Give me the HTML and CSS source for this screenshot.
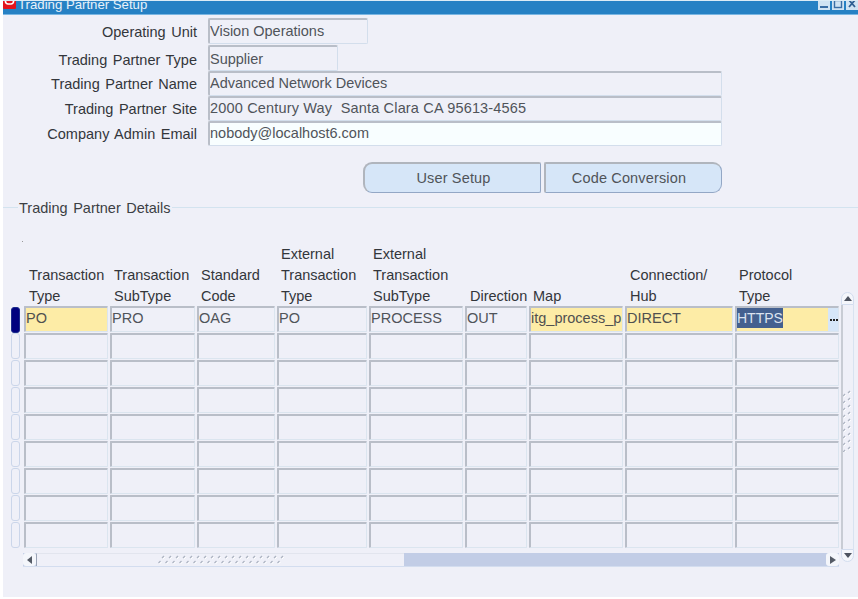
FILE: index.html
```
<!DOCTYPE html>
<html lang="en">
<head>
<meta charset="utf-8">
<title>Trading Partner Setup</title>
<link rel="stylesheet" href="styles.css">
</head>
<body>
<div class="window">
  <header class="titlebar">
    <svg class="app-icon" width="13" height="10" viewBox="0 0 13 10"><rect width="13" height="10" rx="1" fill="#e3141c"/><path d="M2.5 0v2.5a2.5 2.5 0 0 0 2.5 2.5h3a2.5 2.5 0 0 0 2.5-2.5V0" fill="none" stroke="#fff" stroke-width="1.7"/></svg>
    <span class="title-text">Trading Partner Setup</span>
    <div class="win-controls">
      <span class="win-btn"><svg width="12" height="10" viewBox="0 0 12 10"><rect x="2" y="6" width="8" height="2" fill="#3a6ea5"/></svg></span>
      <span class="win-btn"><svg width="12" height="10" viewBox="0 0 12 10"><rect x="2.5" y="0.5" width="7" height="7" fill="none" stroke="#3a6ea5" stroke-width="1.4"/></svg></span>
      <span class="win-btn"><svg width="12" height="10" viewBox="0 0 12 10"><path d="M3 0l6 7M9 0L3 7" stroke="#2f5f92" stroke-width="1.8"/></svg></span>
    </div>
  </header>

  <section class="form">
    <div class="form-row r26 row-first"><label class="form-label">Operating Unit</label><div class="field w-unit">Vision Operations</div></div>
    <div class="form-row r26 row-second"><label class="form-label">Trading Partner Type</label><div class="field w-type">Supplier</div></div>
    <div class="form-row r25"><label class="form-label">Trading Partner Name</label><div class="field w-full">Advanced Network Devices</div></div>
    <div class="form-row r25"><label class="form-label">Trading Partner Site</label><div class="field w-full field-wide">2000 Century Way&nbsp; Santa Clara CA 95613-4565</div></div>
    <div class="form-row r25"><label class="form-label">Company Admin Email</label><div class="field w-full field-input">nobody@localhost6.com</div></div>
  </section>

  <div class="actions">
    <button class="btn btn-left">User Setup</button>
    <button class="btn btn-right">Code Conversion</button>
  </div>

  <div class="section-head">
    <span class="section-rule short"></span>
    <span class="section-title">Trading Partner Details</span>
    <span class="section-rule"></span>
  </div>

  <i class="speck"></i>

  <section class="details">
    <div class="table-col">
      <div class="grid head">
        <span></span>
        <div class="th th-5">Transaction Type</div>
        <div class="th">Transaction SubType</div>
        <div class="th">Standard Code</div>
        <div class="th">External Transaction Type</div>
        <div class="th">External Transaction SubType</div>
        <div class="th th-5 nowrap">Direction</div>
        <div class="th">Map</div>
        <div class="th th-5">Connection/ Hub</div>
        <div class="th">Protocol<br>Type</div>
      </div>
      <div class="grid rows">
        <span class="ind ind-on"></span>
        <div class="cell req">PO</div><div class="cell">PRO</div><div class="cell">OAG</div><div class="cell">PO</div><div class="cell">PROCESS</div><div class="cell">OUT</div><div class="cell req">itg_process_p</div><div class="cell req">DIRECT</div>
        <div class="cell req cell-last"><span class="sel">HTTPS</span><span class="lov"><svg width="9" height="3" viewBox="0 0 9 3"><path d="M1 0h2v2H1zM4 0h2v2H4zM7 0h2v2H7z" fill="#222"/></svg></span></div>

        <span class="ind"></span><div class="cell"></div><div class="cell"></div><div class="cell"></div><div class="cell"></div><div class="cell"></div><div class="cell"></div><div class="cell"></div><div class="cell"></div><div class="cell"></div>
        <span class="ind"></span><div class="cell"></div><div class="cell"></div><div class="cell"></div><div class="cell"></div><div class="cell"></div><div class="cell"></div><div class="cell"></div><div class="cell"></div><div class="cell"></div>
        <span class="ind"></span><div class="cell"></div><div class="cell"></div><div class="cell"></div><div class="cell"></div><div class="cell"></div><div class="cell"></div><div class="cell"></div><div class="cell"></div><div class="cell"></div>
        <span class="ind"></span><div class="cell"></div><div class="cell"></div><div class="cell"></div><div class="cell"></div><div class="cell"></div><div class="cell"></div><div class="cell"></div><div class="cell"></div><div class="cell"></div>
        <span class="ind"></span><div class="cell"></div><div class="cell"></div><div class="cell"></div><div class="cell"></div><div class="cell"></div><div class="cell"></div><div class="cell"></div><div class="cell"></div><div class="cell"></div>
        <span class="ind"></span><div class="cell"></div><div class="cell"></div><div class="cell"></div><div class="cell"></div><div class="cell"></div><div class="cell"></div><div class="cell"></div><div class="cell"></div><div class="cell"></div>
        <span class="ind"></span><div class="cell"></div><div class="cell"></div><div class="cell"></div><div class="cell"></div><div class="cell"></div><div class="cell"></div><div class="cell"></div><div class="cell"></div><div class="cell"></div>
        <span class="ind"></span><div class="cell"></div><div class="cell"></div><div class="cell"></div><div class="cell"></div><div class="cell"></div><div class="cell"></div><div class="cell"></div><div class="cell"></div><div class="cell"></div>
      </div>
      <div class="hscroll">
        <span class="arrow-btn arrow-l"><svg width="6" height="8" viewBox="0 0 6 8"><path d="M5 0v8L0 4z" fill="#555b66"/></svg></span>
        <span class="hthumb">
          <svg class="grip" width="126" height="10" viewBox="0 0 126 10">
            <defs><pattern id="gh" width="7" height="10" patternUnits="userSpaceOnUse"><path d="M4 3l2-2" stroke="#adb4c2" stroke-width="1.2"/><path d="M5 4l2-2" stroke="#fff" stroke-width="1"/><path d="M.5 8l2-2" stroke="#adb4c2" stroke-width="1.2"/><path d="M1.5 9l2-2" stroke="#fff" stroke-width="1"/></pattern></defs>
            <rect width="126" height="10" fill="url(#gh)"/>
          </svg>
        </span>
        <span class="htrack"></span>
        <span class="arrow-btn arrow-r"><svg width="6" height="8" viewBox="0 0 6 8"><path d="M0 0v8l6-4z" fill="#555b66"/></svg></span>
      </div>
    </div>
    <div class="vscroll">
      <span class="v-arrow v-up"><svg width="8" height="5" viewBox="0 0 8 5"><path d="M0 5h8L4 0z" fill="#4d5360"/></svg></span>
      <span class="vthumb">
        <svg class="grip" width="10" height="62" viewBox="0 0 10 62">
          <defs><pattern id="gv" width="10" height="7" patternUnits="userSpaceOnUse"><path d="M0 6l2-2" stroke="#adb4c2" stroke-width="1.2"/><path d="M1 7l2-2" stroke="#fff" stroke-width="1"/><path d="M5 3l2-2" stroke="#adb4c2" stroke-width="1.2"/><path d="M6 4l2-2" stroke="#fff" stroke-width="1"/></pattern></defs>
          <rect width="10" height="62" fill="url(#gv)"/>
        </svg>
      </span>
      <span class="v-arrow v-down"><svg width="8" height="5" viewBox="0 0 8 5"><path d="M0 0h8L4 5z" fill="#4d5360"/></svg></span>
    </div>
  </section>
</div>
</body>
</html>
```
FILE: styles.css
```
* { box-sizing: border-box; }
html, body { margin: 0; padding: 0; background: #fff; }
body { width: 858px; height: 599px; overflow: hidden; font-family: "Liberation Sans", Arial, sans-serif; font-size: 14.5px; color: #3a3d42; }

.window { width: 855px; height: 597px; margin-left: 3px; background: #eff0f8; display: flex; flex-direction: column; overflow: hidden; }

.titlebar { height: 15px; flex: none; background: #2681c4; border-bottom: 1px solid #7ab6e2; border-top: 1px solid #dcecf6; display: flex; align-items: flex-start; overflow: hidden; }
.app-icon { flex: none; margin-top: -2px; }
.title-text { color: #e8f2fa; font-size: 13.2px; margin-left: 2px; line-height: 14px; margin-top: -3px; white-space: nowrap; }
.win-controls { margin-left: auto; display: flex; gap: 1px; margin-top: -1px; }
.win-btn { width: 12px; height: 10px; background: #cfe3f3; display: block; margin-left: 1px; }
.win-btn svg { display: block; }

.form { display: flex; flex-direction: column; margin-top: 3px; flex: none; }
.form-row { display: flex; align-items: stretch; }
.r26 { height: 26px; }
.row-first { margin-bottom: 1px; }
.r25 { height: 25px; }
.form-label { width: 194px; text-align: right; line-height: 27px; color: #33363b; flex: none; word-spacing: 1.5px; white-space: nowrap; }
.row-first .form-label { line-height: 28px; }
.row-second .form-label { line-height: 30px; }
.field { margin-left: 11px; padding-left: 0; line-height: 21px; color: #50545a; background: #eff0f8; border: 1px solid #d3deec; border-top: 2px solid #b9bec8; border-left: 2px solid #b9bec8; border-radius: 2px; white-space: nowrap; overflow: hidden; }
.row-first .field { line-height: 22px; }
.row-second .field { line-height: 24px; }
.field-wide { letter-spacing: .17px; }
.w-unit { width: 160px; }
.w-type { width: 130px; }
.w-full { width: 514px; }
.field-input { background: #f8feff; }

.actions { display: flex; gap: 3px; margin: 16px 0 0 360px; flex: none; }
.btn { height: 31px; width: 178px; background: #d6e6f8; border: 1px solid #93a7c5; border-top: 2px solid #b0b5bd; border-left: 2px solid #b0b5bd; color: #505459; font: inherit; letter-spacing: .15px; padding: 0; }
.btn-left { border-radius: 9px 2px 2px 9px; padding-left: 2px; }
.btn-right { border-radius: 2px 9px 9px 2px; padding-right: 9px; }

.section-head { display: flex; align-items: center; margin-top: 7px; height: 16px; flex: none; }
.section-rule { flex: 1; height: 1px; background: #d3e3ef; margin-bottom: 2px; }
.section-rule.short { flex: none; width: 15px; }
.section-title { padding: 0 1px; color: #3c3f44; word-spacing: 1.5px; }

.speck { display: block; width: 1px; height: 1px; background: #999; margin: 25px 0 0 19px; flex: none; }

.details { display: flex; margin-left: 8px; margin-top: 2px; flex: none; }
.table-col { width: 828px; flex: none; }
.grid { display: grid; grid-template-columns: 11px 84px 85px 78px 90px 94px 62px 94px 108px 104px; column-gap: 2px; }
.head { height: 62px; align-items: end; }
.th { padding-left: 4px; line-height: 21px; color: #33363b; }
.th-5 { padding-left: 5px; }
.th.nowrap { white-space: nowrap; }
.rows { row-gap: 1px; grid-auto-rows: 26px; }
.ind { width: 9px; height: 26px; background: #eff0f8; border: 1px solid #cbd6ea; border-radius: 3px; }
.ind-on { background: #00007e; border-color: #1a2a8c; margin-top: 1px; }
.cell { background: #eff0f8; border: 1px solid #dbe5ef; border-top: 2px solid #b9bec8; border-left: 2px solid #b9bec8; padding-left: 0; line-height: 21px; color: #50545a; white-space: nowrap; overflow: hidden; border-radius: 1px; }
.req { background: #fdeca6; color: #505050; }
.cell-last { display: flex; align-items: flex-start; justify-content: space-between; }
.sel { background: #44608f; color: #dce3f0; font-size: 14px; line-height: 20px; }
.lov { width: 10px; height: 24px; background: #d6e6f8; display: flex; align-items: center; justify-content: center; flex: none; }
.lov svg { display: block; }

.hscroll { margin: 5px 0 0 12px; height: 14px; display: flex; width: 816px; background: #c2cde6; border-bottom: 1px solid #d3ddef; }
.arrow-btn { width: 13px; flex: none; background: #f4f6fb; display: flex; align-items: center; justify-content: center; border-radius: 3px; }
.hthumb { width: 368px; flex: none; background: #eff0f8; border-left: 1px solid #9aa3b5; border-top: 1px solid #e2e5ee; display: flex; justify-content: center; align-items: center; }
.htrack { flex: 1; background: #c2cde6; }
.grip { display: block; }

.vscroll { width: 13px; margin: 48px 0 0 2px; height: 270px; display: flex; flex-direction: column; flex: none; }
.v-arrow { height: 13px; flex: none; display: flex; align-items: center; justify-content: center; background: #f4f6fb; border: 1px solid #d3ddef; }
.v-up { border-radius: 7px 7px 0 0; }
.v-down { border-radius: 0 0 7px 7px; }
.vthumb { flex: 1; background: #eff0f8; border-left: 2px solid #c8ccd4; border-right: 1px solid #d8e2f0; display: flex; align-items: center; justify-content: center; padding-bottom: 12px; }
```
